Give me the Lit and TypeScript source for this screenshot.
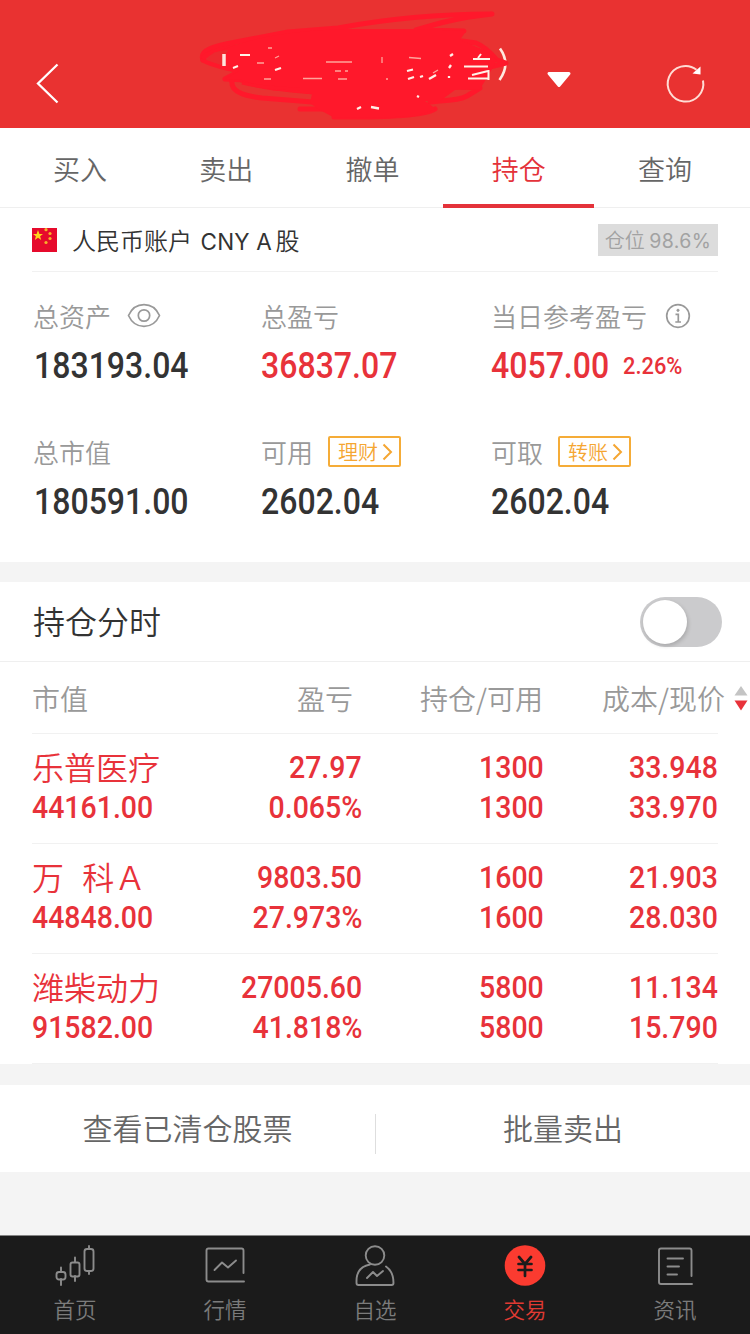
import { LitElement, html, svg, css, nothing } from "lit";
import { customElement, property, state } from "lit/decorators.js";
import { classMap } from "lit/directives/class-map.js";

interface Holding {
  name: string;
  value: string;
  profit: string;
  rate: string;
  held: string;
  available: string;
  cost: string;
  price: string;
}

const HOLDINGS: Holding[] = [
  { name: "乐普医疗", value: "44161.00", profit: "27.97", rate: "0.065%", held: "1300", available: "1300", cost: "33.948", price: "33.970" },
  { name: "万  科Ａ", value: "44848.00", profit: "9803.50", rate: "27.973%", held: "1600", available: "1600", cost: "21.903", price: "28.030" },
  { name: "潍柴动力", value: "91582.00", profit: "27005.60", rate: "41.818%", held: "5800", available: "5800", cost: "11.134", price: "15.790" },
];

@customElement("title-bar")
class TitleBar extends LitElement {
  static styles = css`
    :host { display: block; height: 128px; background: #e93231; }
    svg { display: block; }
  `;
  render() {
    return html`<svg width="750" height="128" viewBox="0 0 750 128" fill="none">
      <path d="M57.500 64.500L38 83.500L57.500 102.500" stroke="#fff" stroke-width="2.300"/>
      <path d="M500 48.500Q511 64 499.500 80" stroke="#ffe9df" stroke-width="2.600"/>
      <g stroke="#ff182b" stroke-linecap="round" stroke-linejoin="round" stroke-width="5">
        <path d="M203 60C199 50 214 46 236 42L288 32L338 28C370 22 420 14 492 14C456 18 436 24 416 30L464 31"/>
        <path d="M203 60C212 66 224 67 240 71L225 79C245 80 305 82 375 81C430 82 470 72 506 63L497 60Q486 47 476 43L462 41"/>
        <path d="M204 57Q215 48 250 46L330 39"/>
        <path d="M232 80C230 92 245 96 262 98L325 103M242 80C258 89 300 90 330 94"/>
        <path d="M462 87L480 88L467 96Q460 100 440 101L430 102"/>
        <path d="M300 109H345M435 109Q422 118 334 117"/>
      </g>
      <path d="M222 50C262 34 300 31 345 29L416 29L466 31L460 40L484 50L497 60L488 76L480 89L455 90L440 101L425 101L436 109L416 116L375 118L333 117L318 109L310 103L312 94L272 90L242 80L225 79L239 71L225 64Z" fill="#ff182b"/>
      <path d="M242 83Q262 88 300 89" stroke="#ff182b" stroke-width="3"/>
      <path d="M206 60Q212 50 228 50L221 65Z" fill="#ed292f"/>
      <path d="M224 54V66" stroke="#ffe4dc" stroke-width="3.500"/>
      <path d="M240 55H250M233 68L238 66M473 59H490M464 66.500H488M468 78.500H489M488.500 70V80M472 75L488 71M478 58L481 54" stroke="#fff3e8" stroke-width="2"/>
      <path d="M407 71L413 69.500M408 79L414 77M420 77L423 76M429 79L436 75M449 68L451 65M449 76V78M450 56L453 54M417 96L419 97M357 109L361 107M371 107L379 108.500M275 70L281 68" stroke="#fff0e8" stroke-width="2.300"/>
      <path d="M257 63H264M326 62H352M303 78.500H322M338 79H347M335 71H341M345 71H348M382 57V63M264 79H271M268 48H272M275 58L279 56M433 73L438 70M409 57.500L421 58.500M386 79H388" stroke="#ffa49b" stroke-width="1.300"/>
      <path d="M549 73.500H569L559 85.500Z" fill="#fff" stroke="#fff" stroke-width="3" stroke-linejoin="round"/>
      <path d="M696.500 69.800A17.800 17.800 0 1 0 703 80.500" stroke="#ffdcd4" stroke-width="2"/>
      <path d="M700.500 66.500V74.500L692.500 73.500Z" fill="#fff"/>
    </svg>`;
  }
}

@customElement("trade-tabs")
class TradeTabs extends LitElement {
  @state() private active = 3;
  static styles = css`
    :host { display: flex; height: 79px; padding: 0 12px 0 7px; border-bottom: 1px solid #efefef; background: #fff; }
    .tab { flex: 1 1 0; min-width: 0; height: 80px; display: flex; flex-direction: column; align-items: center; color: #666; font-size: 27px; line-height: 82px; cursor: pointer; }
    .on { color: #e4323a; }
    .bar { width: 151px; height: 4px; margin-top: -6px; background: #e4323a; flex: none; }
  `;
  render() {
    return ["买入", "卖出", "撤单", "持仓", "查询"].map(
      (t, i) => html`<div class=${classMap({ tab: true, on: i === this.active })} @click=${() => (this.active = i)}>
        <span>${t}</span>${i === this.active ? html`<div class="bar"></div>` : nothing}
      </div>`
    );
  }
}

@customElement("account-summary")
class AccountSummary extends LitElement {
  static styles = css`
    :host { display: block; height: 354px; background: #fff; }
    .account { display: flex; align-items: center; height: 63px; margin: 0 32px; border-bottom: 1px solid #f1f1f1; }
    .flag { margin-right: 15px; }
    .name { font-size: 24px; color: #333; flex: 1; white-space: pre; }
    .lat { font-family: Inter, sans-serif; font-weight: 400; font-size: 22.500px; letter-spacing: .2px; margin: 0 -2px 0 2px; }
    .tag { width: 120px; height: 32px; line-height: 31px; background: #dcdcdc; color: #a2a2a2; font-size: 20px; text-align: center; white-space: nowrap; }
    .tag span { font-family: Inter, sans-serif; font-weight: 400; font-size: 19.500px; letter-spacing: .4px; }
    .grid { display: grid; grid-template-columns: 227px 230px 1fr; grid-auto-rows: 136px; padding: 24px 0 0 34px; }
    .label { display: flex; align-items: center; height: 39px; margin-bottom: 1px; font-size: 26px; color: #999; line-height: 39px; }
    .first { margin-left: -1px; }
    .label svg { margin-left: 18px; }
    .first svg { margin-left: 16px; }
    .value { display: flex; align-items: center; height: 60px; color: #333; }
    .red { color: #e8323a; }
    .num { font: 500 36px/60px Roboto, sans-serif; transform: scaleX(.89); transform-origin: left; }
    .pct { font: 500 24px/60px Roboto, sans-serif; transform: scaleX(.91); transform-origin: left; margin-left: -1px; }
    .link { display: flex; align-items: center; box-sizing: border-box; width: 73px; height: 31px; margin-left: 15px; padding-left: 8px; border: 2px solid #f5ac38; border-radius: 2px; color: #f5a632; font-size: 20px; line-height: 27px; }
    .link svg { margin-left: 4px; }
  `;
  private link(text: string) {
    return html`<span class="link">${text}<svg width="11" height="18" viewBox="0 0 11 18"><path d="M1.500 1.500L9 9L1.500 16.500" fill="none" stroke="#f5a632" stroke-width="2"/></svg></span>`;
  }
  render() {
    return html`
      <div class="account">
        <svg class="flag" width="25" height="24" viewBox="0 0 25 24">
          <rect width="25" height="24" fill="#e60a2c"/>
          <path d="M6 2L7.400 5.900L11 5.900L8.100 8.200L9.200 12L6 9.700L2.800 12L3.900 8.200L1 5.900L4.600 5.900Z" fill="#ffd51c"/>
          <g fill="#f6b22a"><circle cx="14" cy="1.700" r="1.600"/><circle cx="18" cy="5.500" r="1.600"/><circle cx="18" cy="10.500" r="1.600"/><circle cx="14" cy="14.500" r="1.600"/></g>
        </svg>
        <span class="name">人民币账户<span class="lat"> CNY A</span> 股</span>
        <span class="tag">仓位 <span>98.6%</span></span>
      </div>
      <div class="grid">
        <div>
          <div class="label first">总资产<svg width="34" height="26" viewBox="0 0 34 26" fill="none" stroke="#999" stroke-width="1.700"><path d="M1.500 12.500C8 -2 26 -2 32.500 12.500C26 27 8 27 1.500 12.500Z"/><circle cx="17" cy="12.500" r="5.700"/></svg></div>
          <div class="value"><span class="num">183193.04</span></div>
        </div>
        <div>
          <div class="label">总盈亏</div>
          <div class="value red"><span class="num">36837.07</span></div>
        </div>
        <div>
          <div class="label">当日参考盈亏<svg width="26" height="26" viewBox="0 0 26 26" fill="none" stroke="#999" stroke-width="1.700"><circle cx="13" cy="13" r="11.300"/><path d="M10.500 11.300H13.300V19M10.300 19H16"/><circle cx="13" cy="7.300" r="1.100" fill="#999" stroke-width="1"/></svg></div>
          <div class="value red"><span class="num">4057.00</span><span class="pct">2.26%</span></div>
        </div>
        <div>
          <div class="label first">总市值</div>
          <div class="value"><span class="num">180591.00</span></div>
        </div>
        <div>
          <div class="label">可用${this.link("理财")}</div>
          <div class="value"><span class="num">2602.04</span></div>
        </div>
        <div>
          <div class="label">可取${this.link("转账")}</div>
          <div class="value"><span class="num">2602.04</span></div>
        </div>
      </div>`;
  }
}

@customElement("holdings-table")
class HoldingsTable extends LitElement {
  @property({ attribute: false }) rows: Holding[] = [];
  static styles = css`
    :host { display: block; background: #fff; }
    .title { display: flex; align-items: center; justify-content: space-between; height: 79px; padding: 0 28px 0 33px; border-bottom: 1px solid #efefef; font-size: 32px; line-height: 76px; color: #333; }
    .title span { margin-bottom: 3px; }
    .switch { box-sizing: border-box; width: 82px; height: 50px; padding: 3px; border-radius: 25px; background: #cbcbcd; margin-top: 1px; }
    .knob { width: 44px; height: 44px; border-radius: 50%; background: #fff; box-shadow: 1px 2px 4px rgba(0,0,0,.18); }
    .head, .row { display: grid; grid-template-columns: 150px 180px 182px 1fr; margin-left: 32px; margin-right: 32px; border-bottom: 1px solid #f1f1f1; }
    .head { height: 71px; font-size: 28px; color: #999; line-height: 72px; }
    .head > * { white-space: nowrap; text-align: right; }
    .head > :first-child { text-align: left; }
    .head > :nth-child(2) { padding-right: 9px; }
    .head > :nth-child(3) { padding-right: 1px; }
    .sortable { display: flex; align-items: center; gap: 9px; margin-right: -30px; justify-content: flex-end; }
    .row { box-sizing: border-box; height: 110px; color: #e8323a; align-content: start; padding-top: 13px; }
    .cell { display: flex; flex-direction: column; align-items: flex-end; font: 500 32px/40px Roboto, sans-serif; }
    .cell span { transform: scaleX(.89); transform-origin: right; white-space: pre; }
    .cell:first-child { align-items: flex-start; }
    .cell:first-child span { transform-origin: left; }
    .cell .stock { font: 350 32px/38px "Noto Sans CJK SC", sans-serif; margin-bottom: 2px; word-spacing: 2px; transform: none; }
  `;
  render() {
    return html`
      <div class="title"><span>持仓分时</span><div class="switch"><div class="knob"></div></div></div>
      <div class="head">
        <span>市值</span><span>盈亏</span><span>持仓/可用</span>
        <span class="sortable">成本/现价<svg width="14" height="26" viewBox="0 0 14 26"><path d="M.5 10.500L7 1L13.500 10.500Z" fill="#c4c4c4"/><path d="M.5 15.500H13.500L7 25.500Z" fill="#e8323a"/></svg></span>
      </div>
      ${this.rows.map(
        (r) => html`<div class="row">
          <div class="cell"><span class="stock">${r.name}</span><span>${r.value}</span></div>
          <div class="cell"><span>${r.profit}</span><span>${r.rate}</span></div>
          <div class="cell"><span>${r.held}</span><span>${r.available}</span></div>
          <div class="cell"><span>${r.cost}</span><span>${r.price}</span></div>
        </div>`
      )}`;
  }
}

const NAV = [
  { label: "首页", icon: svg`<path d="M6 21.500V26M6 33V39M20 11.500V16M20 30V35M34 0V3M34 25V28"/><rect x="1.500" y="26" width="9" height="7.500" rx="2.500"/><rect x="15.500" y="16.500" width="9" height="14" rx="2"/><rect x="29.500" y="3" width="9" height="22" rx="2.500"/>` },
  { label: "行情", icon: svg`<path d="M38.500 27V4.500Q38.500 2.500 36.500 2.500H3.500Q1.500 2.500 1.500 4.500V33.500Q1.500 35.500 3.500 35.500H39"/><path d="M9.500 24L17 16.500L23 21.500L31 14.500"/>` },
  { label: "自选", icon: svg`<circle cx="20" cy="9.500" r="9.300"/><path d="M15 18.500Q1.500 21 1.500 35V37Q1.500 39 3.500 39H36.500Q38.500 39 38.500 37C38.500 29 36 24 31 20.500"/><path d="M12 32L18 26L22 30L28 25"/>` },
  { label: "交易", icon: svg`<circle cx="20" cy="19.500" r="20.300" fill="#fb3b30" stroke="none"/><path d="M14 11L20 18L26 11M20 18V30M13.500 18H26.500M13.500 24H26.500" stroke="#1b1b1b" stroke-width="2.700"/>` },
  { label: "资讯", icon: svg`<path d="M36.500 30V4.500Q36.500 2.500 34.500 2.500H6Q4 2.500 4 4.500V36Q4 38 6 38H37"/><path d="M12.500 12.500H28M12.500 20.500H24M12.500 28.500H22"/>` },
];

@customElement("bottom-nav")
class BottomNav extends LitElement {
  static styles = css`
    :host { display: grid; grid-template-columns: repeat(5, 1fr); box-sizing: border-box; height: 99px; background: #1b1b1b; border-top: 1px solid #848484; }
    .item { display: flex; flex-direction: column; align-items: center; padding-top: 10px; color: #7b7b7b; font-size: 21.500px; line-height: 30px; }
    .item svg { overflow: visible; margin-bottom: 8px; }
    .active { color: #e03a33; }
  `;
  render() {
    return NAV.map(
      (n) => html`<div class=${classMap({ item: true, active: n.label === "交易" })}>
        <svg width="40" height="40" viewBox="0 0 40 40" fill="none" stroke="#8c8c8c" stroke-width="1.900" stroke-linecap="round" stroke-linejoin="round">${n.icon}</svg>
        <span>${n.label}</span>
      </div>`
    );
  }
}

@customElement("app-root")
class AppRoot extends LitElement {
  static styles = css`
    :host { display: flex; flex-direction: column; width: 750px; height: 1334px; overflow: hidden; background: #f4f4f4; font-family: "Noto Sans CJK SC", sans-serif; font-weight: 350; }
    .gap { height: 20px; flex: none; }
    .actions { display: grid; grid-template-columns: 375px 1px 374px; align-items: center; height: 87px; margin-top: 21px; background: #fff; color: #666; font-size: 30px; text-align: center; }
    .actions span { padding-bottom: 3px; }
    .rule { height: 40px; margin-top: 10px; background: #dedede; }
    .spacer { flex: 1; }
  `;
  render() {
    return html`
      <title-bar></title-bar>
      <trade-tabs></trade-tabs>
      <account-summary></account-summary>
      <div class="gap"></div>
      <holdings-table .rows=${HOLDINGS}></holdings-table>
      <div class="actions"><span>查看已清仓股票</span><i class="rule"></i><span>批量卖出</span></div>
      <div class="spacer"></div>
      <bottom-nav></bottom-nav>`;
  }
}
